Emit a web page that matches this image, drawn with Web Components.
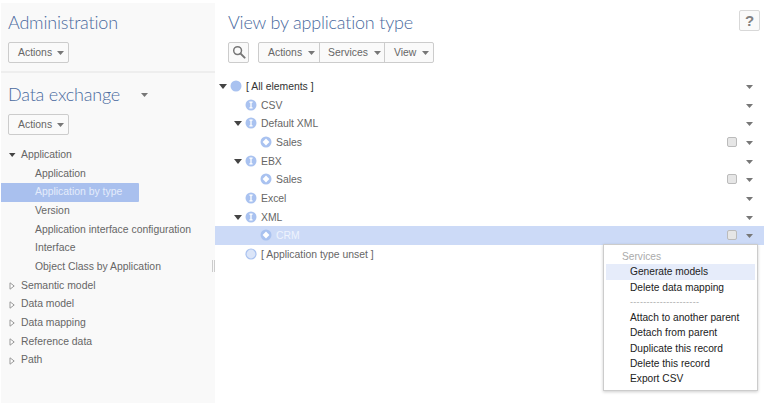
<!DOCTYPE html>
<html lang="en"><head><meta charset="utf-8"><title>Data exchange</title>
<style>
html,body{margin:0;padding:0;background:#fff}
body{font:10.4px/1.2 "Liberation Sans",Arial,sans-serif;color:#555;width:776px;height:403px;overflow:hidden}
</style></head><body>
<app-shell>
  <side-panel slot="side">
    <panel-title>Administration</panel-title>
    <btn-row><drop-btn>Actions</drop-btn></btn-row>
    <panel-divider></panel-divider>
    <panel-title caret>Data exchange</panel-title>
    <btn-row><drop-btn>Actions</drop-btn></btn-row>
    <nav-tree>
      <nav-row state="open">Application</nav-row>
      <nav-row child>Application</nav-row>
      <nav-row child selected>Application by type</nav-row>
      <nav-row child>Version</nav-row>
      <nav-row child>Application interface configuration</nav-row>
      <nav-row child>Interface</nav-row>
      <nav-row child>Object Class by Application</nav-row>
      <nav-row state="closed">Semantic model</nav-row>
      <nav-row state="closed">Data model</nav-row>
      <nav-row state="closed">Data mapping</nav-row>
      <nav-row state="closed">Reference data</nav-row>
      <nav-row state="closed">Path</nav-row>
    </nav-tree>
  </side-panel>
  <main-panel slot="main">
    <panel-title main>View by application type</panel-title>
    <help-btn></help-btn>
    <tool-bar>
      <search-btn></search-btn>
      <btn-group><drop-btn grouped>Actions</drop-btn><drop-btn grouped tight>Services</drop-btn><drop-btn grouped>View</drop-btn></btn-group>
    </tool-bar>
    <data-tree>
      <tree-row level="0" open icon="full">[ All elements ]</tree-row>
      <tree-row level="1" icon="info">CSV</tree-row>
      <tree-row level="1" open icon="info">Default XML</tree-row>
      <tree-row level="2" icon="diamond" check>Sales</tree-row>
      <tree-row level="1" open icon="info">EBX</tree-row>
      <tree-row level="2" icon="diamond" check>Sales</tree-row>
      <tree-row level="1" icon="info">Excel</tree-row>
      <tree-row level="1" open icon="info">XML</tree-row>
      <tree-row level="2" icon="diamond" check selected>CRM</tree-row>
      <tree-row level="1" icon="ring" nomenu>[ Application type unset ]</tree-row>
    </data-tree>
    <pop-menu>
      <menu-item head>Services</menu-item>
      <menu-item hover>Generate models</menu-item>
      <menu-item>Delete data mapping</menu-item>
      <menu-item sep>---------------------</menu-item>
      <menu-item>Attach to another parent</menu-item>
      <menu-item>Detach from parent</menu-item>
      <menu-item>Duplicate this record</menu-item>
      <menu-item>Delete this record</menu-item>
      <menu-item>Export CSV</menu-item>
    </pop-menu>
  </main-panel>
</app-shell>
<script>
const caret=(c='#777')=>`<svg width="7" height="4" viewBox="0 0 7 4" aria-hidden="true"><path d="M0 0H7L3.5 4Z" fill="${c}"/></svg>`;
function def(name,css,html){
  customElements.define(name,class extends HTMLElement{
    connectedCallback(){
      if(this.shadowRoot)return;
      const r=this.attachShadow({mode:'open'});
      r.innerHTML=`<style>${css}</style>`+(typeof html==='function'?html(this):html);
    }
  });
}
def('app-shell',`:host{display:grid;grid-template-columns:215px 1fr;width:776px;height:403px}`,`<slot name="side"></slot><slot name="main"></slot>`);
def('side-panel',`:host{display:block;position:relative;background:#f9f9f9;margin:3px 0 0 1px;height:400px;box-sizing:border-box;padding-top:7px}
 .grip{position:absolute;left:211px;top:257px;width:3px;height:12px;border:solid #ccc;border-width:0 1px;box-sizing:border-box}`,`<slot></slot><div class="grip"></div>`);
def('main-panel',`:host{display:block;position:relative;padding-top:10px}`,`<slot></slot>`);
def('panel-title',`:host{display:flex;align-items:center;height:24px;padding-left:7px;font:300 18px/24px Lato,Roboto,sans-serif;letter-spacing:-.2px;color:#4a6a9e}
 :host([main]){padding-left:13px} svg{margin-left:21px;margin-top:1px}`,
 e=>`<slot></slot>${e.hasAttribute('caret')?caret('#777'):''}`);
def('btn-row',`:host{display:block;height:21px;padding:8px 0 9px 7px}`,`<slot></slot>`);
def('panel-divider',`:host{display:block;height:2px;background:#eee;margin:-1px 0 9px}`,``);
def('drop-btn',`:host{display:inline-flex;align-items:center;box-sizing:border-box;height:21px;padding:0 4px 0 9px;gap:5px;border:1px solid #ccc;border-radius:2px;background:#fafafa;color:#666;font:10.4px "Liberation Sans",Arial,sans-serif}
 :host([grouped]){border:0;border-radius:0;height:19px;background:transparent;gap:6px}
 :host([grouped]:not(:last-child)){border-right:1px solid #ccc}
 :host([tight]){padding:0 3px 0 8px}`,`<slot></slot>${caret('#777')}`);
def('nav-tree',`:host{display:block;padding-top:2px}`,`<slot></slot>`);
def('nav-row',`:host{display:flex;align-items:center;box-sizing:border-box;height:18.67px;color:#666;font-size:10.4px;padding-left:7px;width:138px;white-space:nowrap}
 :host([child]){padding-left:34px}
 :host([selected]){background:#a9c0ee;color:#e4ecfb;border-radius:0 1px 1px 0}
 svg{margin-right:5px;flex:none}`,
 e=>{const s=e.getAttribute('state');
  const i=s==='open'?`<svg width="8" height="8" viewBox="0 0 8 8"><path d="M1 2H7.5L4.2 6Z" fill="#444"/></svg>`:s==='closed'?`<svg width="8" height="8" viewBox="0 0 8 8"><path d="M2 .8 6.2 4 2 7.2Z" fill="#fff" stroke="#999"/></svg>`:'';
  return i+`<slot></slot>`;});
def('tool-bar',`:host{display:flex;gap:9px;padding:8px 0 0 13px;height:21px}`,`<slot></slot>`);
def('search-btn',`:host{display:block;box-sizing:border-box;width:21px;height:21px;border:1px solid #ccc;border-radius:2px;background:#fafafa}
 svg{display:block;margin:2px 0 0 3px}`,`<svg width="14" height="14" viewBox="0 0 14 14"><circle cx="5.6" cy="5.6" r="3.9" fill="none" stroke="#777" stroke-width="1.5"/><path d="M8.6 8.6 12.6 12.6" stroke="#777" stroke-width="2" stroke-linecap="round"/></svg>`);
def('btn-group',`:host{display:flex;align-items:center;box-sizing:border-box;height:21px;border:1px solid #ccc;border-radius:2px;background:#fafafa}`,`<slot></slot>`);
def('help-btn',`:host{position:absolute;left:524px;top:10px;box-sizing:border-box;width:21px;height:21px;border:1px solid #d8d8d8;border-radius:2px;background:#fafafa;color:#808080;font:bold 15px/19px "Liberation Sans",Arial,sans-serif;text-align:center}`,`?`);
def('data-tree',`:host{display:block;padding-top:14px}`,`<slot></slot>`);
const icons={
 full:`<circle cx="6" cy="6" r="5.5" fill="#a9c2f0"/>`,
 info:`<circle cx="6" cy="6" r="5.5" fill="#a9c2f0"/><path d="M4.4 3.2H7.6M4.4 8.8H7.6M6 3.2V8.8" stroke="#fff" stroke-width="1.3" fill="none"/>`,
 diamond:`<circle cx="6" cy="6" r="5.5" fill="#a9c2f0"/><path d="M6 2.6 9.4 6 6 9.4 2.6 6Z" fill="#fff"/>`,
 ring:`<circle cx="6" cy="6" r="5" fill="#dbe5f8" stroke="#a9c2f0" stroke-width="1.2"/>`
};
def('tree-row',`:host{display:block;position:relative;box-sizing:border-box;height:18.67px;margin-right:12px;color:#666;font-size:10.4px}
 :host([selected]){background:#ccdaf7;color:#eef3fd}
 .tw{position:absolute;top:7px}.ic{position:absolute;top:3px}.lb{position:absolute;top:3px;white-space:nowrap;line-height:13px}
 .ck{position:absolute;left:512px;top:4px;box-sizing:border-box;width:10px;height:10px;border:1px solid #bbb;border-radius:2px;background:#e6e6e6}
 .mn{position:absolute;left:531px;top:8px;line-height:0}
 :host([level="0"]) .lb{color:#333}`,
 e=>{const l=+e.getAttribute('level');const x=4+15*l;
  return (e.hasAttribute('open')?`<svg class="tw" style="left:${x}px" width="8" height="5" viewBox="0 0 8 5"><path d="M0 0H8L4 5Z" fill="#444"/></svg>`:'')
  +`<svg class="ic" style="left:${x+11}px" width="12" height="12" viewBox="0 0 12 12">${icons[e.getAttribute('icon')]}</svg>`
  +`<span class="lb" style="left:${x+27}px"><slot></slot></span>`
  +(e.hasAttribute('check')?`<span class="ck"></span>`:'')
  +(e.hasAttribute('nomenu')?'':`<span class="mn">${caret('#777')}</span>`);});
def('pop-menu',`:host{position:absolute;left:388px;top:244px;box-sizing:border-box;width:155px;height:147px;background:#fff;border:1px solid #ccc;box-shadow:0 1px 3px rgba(0,0,0,.2);padding:4px 2px 0}`,`<slot></slot>`);
def('menu-item',`:host{display:block;box-sizing:border-box;height:15.3px;line-height:15.3px;padding-left:24px;color:#222;font-size:10.2px;white-space:nowrap}
 :host([head]){color:#aaa;padding-left:16px}
 :host([hover]){background:#e6ecfa}
 :host([sep]){color:#aaa;font-size:9px;letter-spacing:.3px}`,`<slot></slot>`);
</script>
</body></html>
